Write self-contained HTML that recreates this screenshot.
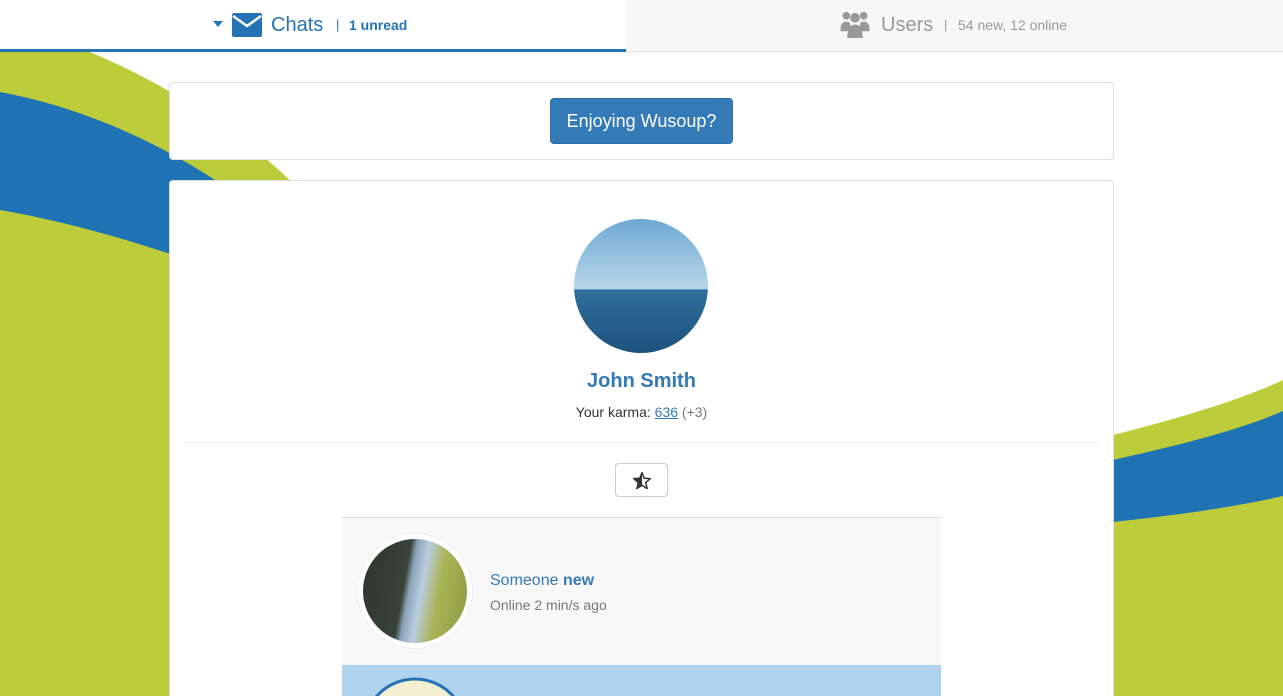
<!DOCTYPE html>
<html style="width:1283px;height:696px;overflow:hidden"><head><style>
*{box-sizing:border-box;margin:0;padding:0}
html,body{width:1283px;height:696px;overflow:hidden}
body{background:#fff;font-family:"Liberation Sans",sans-serif;position:relative}
.bg{position:absolute;left:0;top:0}
.nav{position:absolute;top:0;left:0;width:1283px;height:52px}
.tab1{position:absolute;left:0;top:0;width:626px;height:52px;background:#fff;border-bottom:3px solid #2573b5}
.tab2{position:absolute;left:626px;top:0;width:657px;height:52px;background:#f7f7f7;border-bottom:1px solid #e6e6e6}
.card{position:absolute;left:169px;width:945px;background:#fff;border:1px solid #ddd;border-radius:4px}
.btn{position:absolute;left:550px;top:98px;width:183px;height:46px;background:#337ab7;border:1px solid #2e6da4;border-radius:4px;color:#fff;font-size:18px;line-height:44px;text-align:center}
</style></head><body>
<svg class="bg" width="1283" height="696">
<path d="M0 52 L90 52 C180 90 250 140 300 190 L300 696 L0 696 Z" fill="#bccc3a"/>
<path d="M0 92 C70 105 150 135 230 190 L230 275 C150 245 70 222 0 210 Z" fill="#1f72b3"/>
<path d="M1113 435 C1180 418 1240 400 1283 380 L1283 696 L1113 696 Z" fill="#bccc3a"/>
<path d="M1113 460 C1180 445 1240 430 1283 411 L1283 496 C1230 508 1170 516 1113 522 Z" fill="#1f72b3"/>
</svg>
<div class="nav">
<div class="tab1">
<svg style="position:absolute;left:213px;top:21px" width="10" height="6"><path d="M0 0H10L5 6Z" fill="#2573b5"/></svg>
<svg style="position:absolute;left:232px;top:13px" width="30" height="24" viewBox="0 0 30 24"><rect width="30" height="24" rx="2" fill="#2573b5"/><path d="M1 3 L15 13 L29 3" stroke="#fff" stroke-width="2.5" fill="none"/></svg>
<span style="position:absolute;left:271px;top:14px;font-size:20px;color:#2573b5">Chats</span>
<span style="position:absolute;left:336px;top:17px;font-size:13px;color:#2573b5">|</span>
<span style="position:absolute;left:349px;top:17px;font-size:14px;color:#2573b5;font-weight:bold">1 unread</span>
</div>
<div class="tab2">
<svg style="position:absolute;left:214px;top:10px" width="30" height="29" viewBox="0 0 30 30" fill="#999"><circle cx="6" cy="6" r="4"/><circle cx="24" cy="6" r="4"/><circle cx="15" cy="8" r="5"/><path d="M0 20 Q0 12 6 12 Q9 12 10 14 L10 22 H0Z"/><path d="M30 20 Q30 12 24 12 Q21 12 20 14 L20 22 H30Z"/><path d="M7 29 Q7 15 15 15 Q23 15 23 29Z"/></svg>
<span style="position:absolute;left:255px;top:14px;font-size:20px;color:#999">Users</span>
<span style="position:absolute;left:318px;top:17px;font-size:13px;color:#999">|</span>
<span style="position:absolute;left:332px;top:17px;font-size:14px;color:#999">54 new, 12 online</span>
</div>
</div>
<div class="card" style="top:82px;height:78px"></div>
<div class="btn">Enjoying Wusoup?</div>
<div class="card" style="top:180px;height:516px;overflow:hidden;border-bottom:none;border-radius:4px 4px 0 0">
<div style="position:absolute;left:404px;top:38px;width:134px;height:134px;border-radius:50%;overflow:hidden;background:linear-gradient(#6ea8d4 0%,#b8d7ea 52%,#2f6e9c 53%,#1d537d 100%)"></div>
<div style="position:absolute;left:0;width:943px;top:189px;text-align:center;font-size:20px;font-weight:bold;color:#337ab7">John Smith</div>
<div style="position:absolute;left:0;width:943px;top:223px;text-align:center;font-size:14px;color:#333">Your karma: <span style="color:#337ab7;text-decoration:underline">636</span> <span style="color:#777">(+3)</span></div>
<div style="position:absolute;left:14px;width:915px;top:261px;border-top:1px solid #eee"></div>
<div style="position:absolute;left:445px;top:282px;width:53px;height:34px;border:1px solid #ccc;border-radius:4px"><svg style="position:absolute;left:17px;top:8px" width="18" height="17" viewBox="0 0 24 23"><path d="M12 1 L15 8.5 L23 9 L17 14.5 L19 22.5 L12 18 L5 22.5 L7 14.5 L1 9 L9 8.5Z" fill="none" stroke="#333" stroke-width="2"/><path d="M12 1 L12 18 L5 22.5 L7 14.5 L1 9 L9 8.5Z" fill="#333"/></svg></div>
<div style="position:absolute;left:172px;top:336px;width:599px;height:148px;background:#f8f8f8;border-top:1px solid #ddd">
<div style="position:absolute;left:15px;top:15px;width:116px;height:116px;border-radius:50%;background:#fff;border:1px solid #eee"></div>
<div style="position:absolute;left:21px;top:21px;width:104px;height:104px;border-radius:50%;overflow:hidden;background:linear-gradient(100deg,#2c3530 0%,#3a4338 40%,#8aa2b8 45%,#b9cce0 55%,#a9b455 70%,#8c9a42 100%)"></div>
<div style="position:absolute;left:148px;top:54px;font-size:16px;color:#337ab7">Someone <b>new</b></div>
<div style="position:absolute;left:148px;top:79px;font-size:14px;color:#777">Online 2 min/s ago</div>
</div>
<div style="position:absolute;left:172px;top:484px;width:599px;height:31px;background:#afd3ef;overflow:hidden">
<svg style="position:absolute;left:0;top:0" width="150" height="31"><circle cx="73" cy="65" r="51" fill="#f4efd0" stroke="#2573b5" stroke-width="3"/></svg>
</div>
</div>
</body></html>
